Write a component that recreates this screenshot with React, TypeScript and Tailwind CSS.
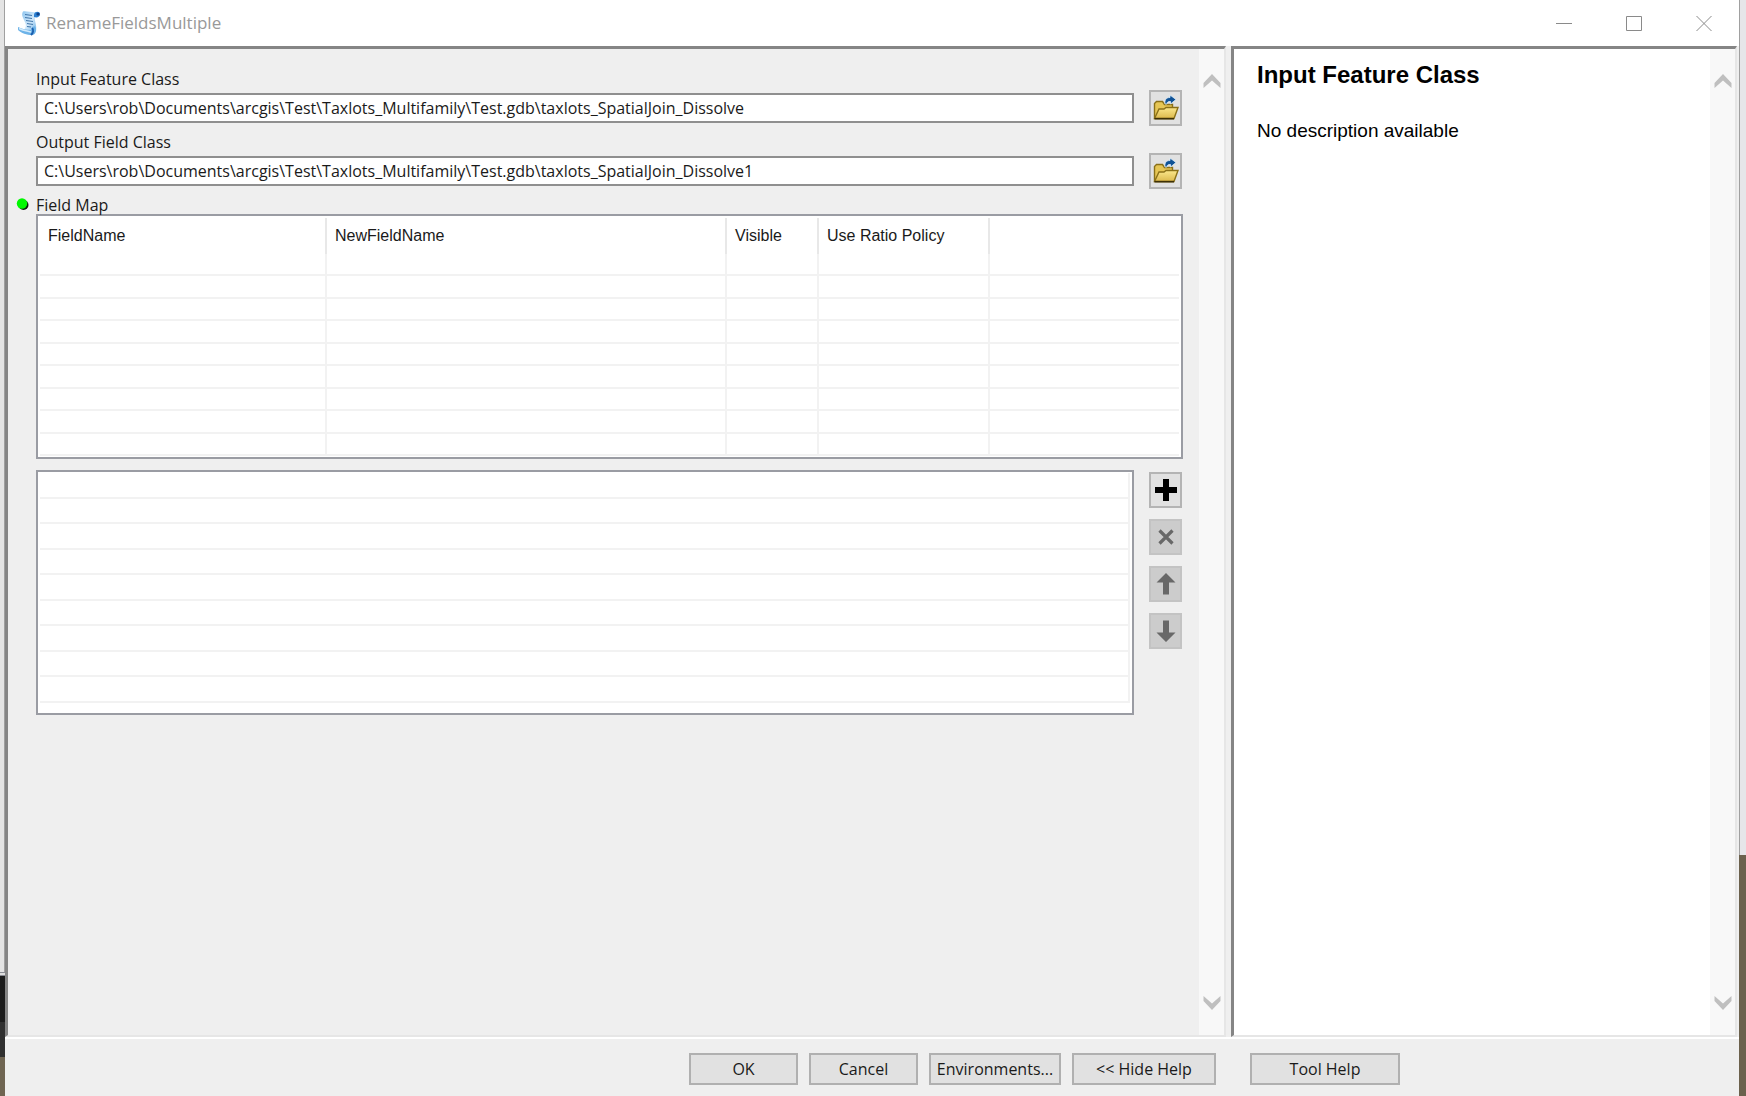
import React from "react";

function ScrollBar({ label }: { label: string }) {
  return (
    <div className="flex w-[25px] shrink-0 flex-col items-center justify-between bg-[#f8f8f8] pt-6 pb-6">
      <button type="button" aria-label={`Scroll ${label} up`}>
        <svg width="18" height="16" viewBox="0 0 18 16" className="block">
          <path d="M0.500 10 9 1l8.500 9v5L9 7.500.500 15z" fill="#bfbfbf" />
        </svg>
      </button>
      <button type="button" aria-label={`Scroll ${label} down`}>
        <svg width="18" height="16" viewBox="0 0 18 16" className="block">
          <path d="M0.500 6 9 15l8.500-9V1L9 8.500.500 1z" fill="#bfbfbf" />
        </svg>
      </button>
    </div>
  );
}

function ScriptIcon() {
  return (
    <svg width="24" height="26" viewBox="0 0 24 26" className="block">
      <defs>
        <linearGradient id="paper" x1="0" y1="0" x2="1" y2="1">
          <stop offset="0" stopColor="#8fc6ef" />
          <stop offset="0.5" stopColor="#cfe7fa" />
          <stop offset="1" stopColor="#5aa5e0" />
        </linearGradient>
      </defs>
      <path d="M6 1.500C9 .500 15 3 21 2l-3 4c-1 5 2 9 1 14l-3 4-9-4c3-4 2-6 0-10-1-3-3-5-1-8.500z" fill="url(#paper)" />
      <path d="M17 5c0-4 6-4 6-1 0 3-3 4-6 3z" fill="#2b7fd0" />
      <circle cx="21" cy="4" r="1.600" fill="#0d3f87" />
      <path d="M1 17c4 2 8 3 13 3l3-4c4 2 2 9-2 9C10 25 4 23 1 20z" fill="#6db3e8" />
      <path d="M2 18.500c4 2 8 2.500 12 3.500" stroke="#d3ebfc" strokeWidth="1.500" fill="none" />
      <path d="M15 18c2 2 1 5-1 7" stroke="#1b5fae" strokeWidth="2" fill="none" />
      <path d="m8 4.500 7 1M8 7.500l7 1M9 10.500l7 1M10 13.500l6 1M10 16.500l4 .5" stroke="#4377ab" strokeWidth="1.200" />
    </svg>
  );
}

function FolderIcon() {
  return (
    <svg width="26" height="26" viewBox="0 0 26 26" className="block">
      <defs>
        <linearGradient id="folder" x1="0" y1="0" x2="0" y2="1">
          <stop offset="0" stopColor="#fbe78c" />
          <stop offset="1" stopColor="#dcb94c" />
        </linearGradient>
      </defs>
      <path d="M1.500 23.500V8.500l2-2h6l2 3h8v4" fill="#e6c655" stroke="#8a7018" strokeWidth="1.400" />
      <path d="M1.500 23.500 6 14h5l2-1.500h12l-4 11z" fill="url(#folder)" stroke="#8a7018" strokeWidth="1.400" />
      <path d="M1.500 23.700h19.500" stroke="#3d3005" strokeWidth="1.600" />
      <path d="M12 9c-.500-4 1-6.500 5-6.500V0l6 4.500L17.500 9V6.500C15 6.500 14 7 14 9z" fill="#0f5296" stroke="#dcedf9" strokeWidth="0.800" />
    </svg>
  );
}

function PathField({ id, label, value }: { id: string; label: string; value: string }) {
  return (
    <div className="grid grid-cols-[1fr_33px] gap-x-[15px] pr-px">
      <label htmlFor={id} className="col-span-2 h-[33px] pt-[7px] text-[16px] leading-[24px]">
        {label}
      </label>
      <input
        id={id}
        defaultValue={value}
        className="h-[30px] min-w-0 border-2 border-[#8f8f8f] bg-white px-1.5 text-[16px] text-[#1a1a1a] outline-none"
      />
      <button
        type="button"
        aria-label={`Browse for ${label}`}
        className="-my-[3px] flex h-9 items-center justify-center border-2 border-[#b4b4b4] bg-[#e1e1e1]"
      >
        <FolderIcon />
      </button>
    </div>
  );
}

const columns = ["FieldName", "NewFieldName", "Visible", "Use Ratio Policy", ""];

function FieldMapTable() {
  return (
    <div className="h-[245px] overflow-hidden border-2 border-[#9a9ca3] bg-white p-0.5">
      <table aria-labelledby="field-map" className="w-full table-fixed border-separate border-spacing-0">
        <colgroup>
          <col className="w-[287px]" />
          <col className="w-[400px]" />
          <col className="w-[92px]" />
          <col className="w-[171px]" />
          <col />
        </colgroup>
        <thead>
          <tr className="h-9">
            {columns.map((name, i) => (
              <th
                key={i}
                className="border-r-2 border-[#e8e8e8] px-2 text-left font-['Liberation_Sans',sans-serif] text-[16px] font-normal text-[#1a1a1a] last:border-r-0"
              >
                {name}
              </th>
            ))}
          </tr>
        </thead>
        <tbody>
          {Array.from({ length: 9 }, (_, row) => (
            <tr key={row} className="odd:h-[22px] even:h-[23px]">
              {columns.map((_, i) => (
                <td key={i} className="border-r-2 border-b-2 border-[#f2f2f2] p-0 last:border-r-0" />
              ))}
            </tr>
          ))}
        </tbody>
      </table>
    </div>
  );
}

function ToolButton({ label, disabled, children }: { label: string; disabled?: boolean; children: React.ReactNode }) {
  return (
    <button
      type="button"
      aria-label={label}
      disabled={disabled}
      className="flex h-9 w-full items-center justify-center border-2 border-[#b4b4b4] bg-[#e1e1e1] disabled:border-[#c3c3c3] disabled:bg-[#cccccc]"
    >
      <svg width="22" height="24" viewBox="0 0 22 24" className="block">
        {children}
      </svg>
    </button>
  );
}

function FooterButton({ className, children }: { className: string; children: React.ReactNode }) {
  return (
    <button
      type="button"
      className={`${className} h-8 shrink-0 border-2 border-[#b0b0b0] bg-[#e1e1e1] text-center text-[16px] whitespace-nowrap`}
    >
      {children}
    </button>
  );
}

export default function App() {
  return (
    <div className="flex h-screen min-h-[800px] overflow-hidden font-['Open_Sans',sans-serif] text-[#1a1a1a]">
      <div className="flex w-[5px] shrink-0 flex-col bg-[#6f6552]">
        <div className="flex-1 border-r border-[#a0a0a0] bg-[#e4e4e4]" />
        <div className="h-1 border-y border-[#8a8c94] bg-[#dddddd]" />
        <div className="h-[46px] bg-[#1c1c1c]" />
        <div className="h-[35px] bg-[#303030]" />
        <div className="h-[39px]" />
      </div>

      <main className="flex min-w-0 flex-1 flex-col bg-[#efefef]">
        <header className="flex h-[46px] shrink-0 items-center bg-white pl-3">
          <ScriptIcon />
          <h1 className="flex-1 pl-[5px] text-[17px] text-[#999999]">RenameFieldsMultiple</h1>
          <div className="flex pr-[27px] text-[#8a8a8a]">
            <button type="button" aria-label="Minimize" className="px-[27px]">
              <svg width="16" height="18" viewBox="0 0 16 18" fill="none" stroke="currentColor" className="block">
                <path d="M0 9.500h16" />
              </svg>
            </button>
            <button type="button" aria-label="Maximize" className="px-[27px]">
              <svg width="16" height="18" viewBox="0 0 16 18" fill="none" stroke="currentColor" className="block">
                <path d="M.5 2.500h15v14H.5z" />
              </svg>
            </button>
            <button type="button" aria-label="Close" className="pl-[27px]">
              <svg width="16" height="18" viewBox="0 0 16 18" fill="none" stroke="currentColor" className="block">
                <path d="m.5 2 15 15m0-15-15 15" />
              </svg>
            </button>
          </div>
        </header>

        <div className="flex min-h-0 flex-1 gap-[5px] border-b-2 border-white">
          <section className="flex min-w-0 flex-1 border-t-3 border-r-2 border-b-2 border-l-3 border-t-[#858585] border-r-[#e6e6e6] border-b-[#e6e6e6] border-l-[#858585]">
            <form className="min-w-0 flex-1 pt-[11px] pr-4 pl-7">
              <PathField
                id="input-class"
                label="Input Feature Class"
                value="C:\Users\rob\Documents\arcgis\Test\Taxlots_Multifamily\Test.gdb\taxlots_SpatialJoin_Dissolve"
              />
              <PathField
                id="output-class"
                label="Output Field Class"
                value="C:\Users\rob\Documents\arcgis\Test\Taxlots_Multifamily\Test.gdb\taxlots_SpatialJoin_Dissolve1"
              />
              <div className="-ml-5 flex h-7 items-end">
                <svg width="20" height="20" viewBox="0 0 20 20" className="block">
                  <circle cx="7.500" cy="11" r="5" fill="#0b1f0b" />
                  <circle cx="6" cy="9.500" r="5.200" fill="#00f800" />
                </svg>
                <h2 id="field-map" className="text-[16px] leading-[18px]">
                  Field Map
                </h2>
              </div>
              <FieldMapTable />

              <div className="mt-[11px] grid grid-cols-[1fr_33px] gap-x-[15px] pr-px">
                <ul aria-label="Fields" className="h-[245px] overflow-hidden border-2 border-[#9a9ca3] bg-white px-0.5 pt-px">
                  {Array.from({ length: 9 }, (_, i) => (
                    <li key={i} className="border-r-2 border-b-2 border-[#f2f2f2] odd:h-[26px] even:h-[25px]" />
                  ))}
                </ul>
                <div className="flex flex-col gap-[11px] pt-0.5">
                  <ToolButton label="Add">
                    <path d="M8 1h6v8h8v6h-8v8H8v-8H0V9h8z" fill="#000" />
                  </ToolButton>
                  <ToolButton label="Remove" disabled>
                    <path d="m4.500 5.500 13 13m0-13-13 13" stroke="#686868" strokeWidth="3.200" />
                  </ToolButton>
                  <ToolButton label="Move up" disabled>
                    <path d="M11 1 20.500 10.500H14v12H8v-12H1.500z" fill="#686868" />
                  </ToolButton>
                  <ToolButton label="Move down" disabled>
                    <path d="M11 23 20.500 13.500H14v-12H8v12H1.500z" fill="#686868" />
                  </ToolButton>
                </div>
              </div>
            </form>
            <ScrollBar label="parameters" />
          </section>

          <aside className="mr-0.5 flex w-[506px] shrink-0 border-t-3 border-r-2 border-b-2 border-l-3 border-t-[#858585] border-r-[#e6e6e6] border-b-[#e6e6e6] border-l-[#858585] bg-white text-black">
            <div className="flex-1 pt-3 pl-[23px] font-['Liberation_Sans',sans-serif]">
              <h2 className="text-[24px] leading-[28px] font-bold">Input Feature Class</h2>
              <p className="pt-7 text-[19px] leading-[28px]">No description available</p>
            </div>
            <ScrollBar label="help" />
          </aside>
        </div>

        <footer className="flex h-[57px] shrink-0 items-start justify-end gap-[11px] pt-3.5 pr-[339px]">
          <FooterButton className="w-[109px]">OK</FooterButton>
          <FooterButton className="w-[109px]">Cancel</FooterButton>
          <FooterButton className="w-[132px]">Environments...</FooterButton>
          <FooterButton className="w-36">&lt;&lt; Hide Help</FooterButton>
          <FooterButton className="ml-[23px] w-[150px]">Tool Help</FooterButton>
        </footer>
      </main>

      <div className="flex w-[7px] shrink-0 flex-col bg-[#6b614d]">
        <div className="h-[78%] border-l border-[#a0a0a0] bg-[#e6e6e9]" />
      </div>
    </div>
  );
}
